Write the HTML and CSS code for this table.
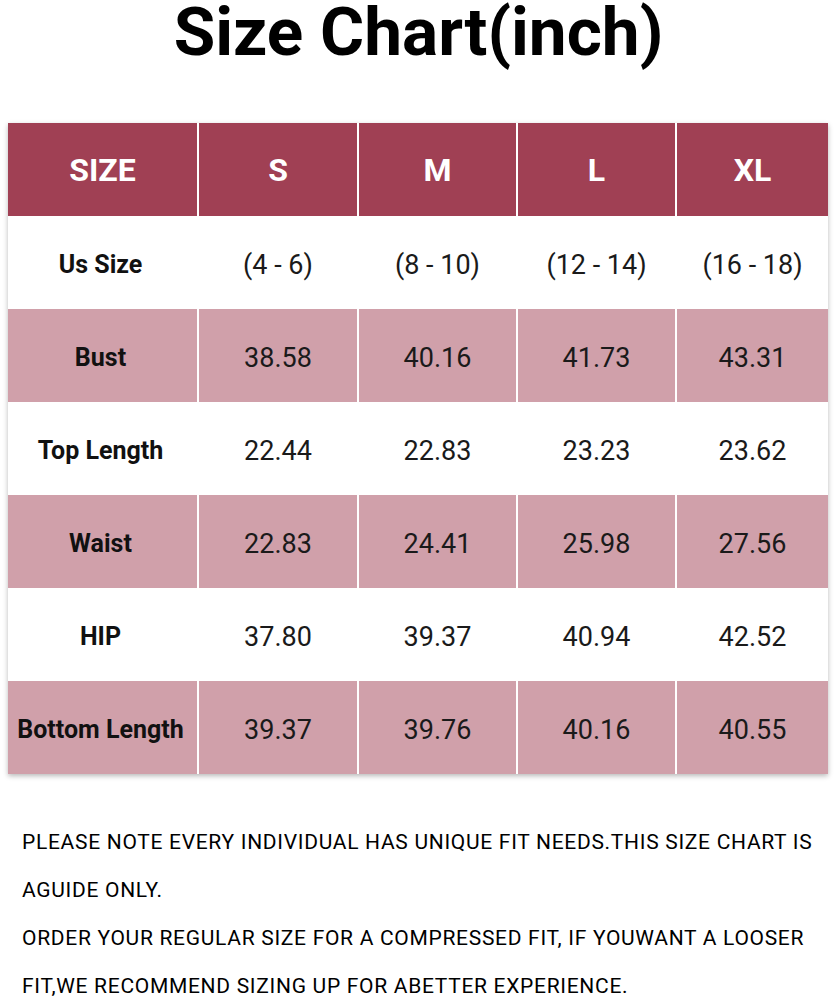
FILE: index.html
```html
<!DOCTYPE html>
<html lang="en">
<head>
<meta charset="utf-8">
<title>Size Chart</title>
<link rel="stylesheet" href="styles.css">
</head>
<body>
<h1 class="title">Size Chart(inch)</h1>
<div class="chart">
  <div class="cell head label">SIZE</div>
  <div class="cell head">S</div>
  <div class="cell head">M</div>
  <div class="cell head">L</div>
  <div class="cell head">XL</div>

  <div class="cell label">Us Size</div>
  <div class="cell">(4 - 6)</div>
  <div class="cell">(8 - 10)</div>
  <div class="cell">(12 - 14)</div>
  <div class="cell">(16 - 18)</div>

  <div class="cell pink label">Bust</div>
  <div class="cell pink">38.58</div>
  <div class="cell pink">40.16</div>
  <div class="cell pink">41.73</div>
  <div class="cell pink">43.31</div>

  <div class="cell label">Top Length</div>
  <div class="cell">22.44</div>
  <div class="cell">22.83</div>
  <div class="cell">23.23</div>
  <div class="cell">23.62</div>

  <div class="cell pink label">Waist</div>
  <div class="cell pink">22.83</div>
  <div class="cell pink">24.41</div>
  <div class="cell pink">25.98</div>
  <div class="cell pink">27.56</div>

  <div class="cell label">HIP</div>
  <div class="cell">37.80</div>
  <div class="cell">39.37</div>
  <div class="cell">40.94</div>
  <div class="cell">42.52</div>

  <div class="cell pink label">Bottom Length</div>
  <div class="cell pink">39.37</div>
  <div class="cell pink">39.76</div>
  <div class="cell pink">40.16</div>
  <div class="cell pink">40.55</div>
</div>
<div class="notes">
  <p class="note"><span class="line">PLEASE NOTE EVERY INDIVIDUAL HAS UNIQUE FIT NEEDS.THIS SIZE CHART IS</span><span class="line">AGUIDE ONLY.</span></p>
  <p class="note"><span class="line">ORDER YOUR REGULAR SIZE FOR A COMPRESSED FIT, IF YOUWANT A LOOSER</span><span class="line">FIT,WE RECOMMEND SIZING UP FOR ABETTER EXPERIENCE.</span></p>
</div>
</body>
</html>
```
FILE: styles.css
```css
html, body {
  margin: 0;
  padding: 0;
  background: #ffffff;
}
body {
  width: 837px;
  font-family: Roboto, "Noto Sans", sans-serif;
  color: #111111;
  overflow: hidden;
}
.title {
  margin: 0;
  padding-top: 3px;
  font-size: 67.5px;
  line-height: 58px;
  font-weight: 700;
  text-align: center;
  color: #000000;
}
.chart {
  margin: 62px 0 0 8px;
  width: 820px;
  display: grid;
  grid-template-columns: 189px 158px 157px 157px 151px;
  grid-auto-rows: 93px;
  column-gap: 2px;
  background: #ffffff;
  box-shadow: 0 2px 5px rgba(0, 0, 0, 0.28);
}
.cell {
  display: flex;
  align-items: center;
  justify-content: center;
  padding-top: 4px;
  font-size: 27px;
  font-weight: 400;
  color: #1a1a1a;
  background: #ffffff;
}
.cell.label {
  font-size: 25px;
  font-weight: 700;
  color: #111111;
  padding-right: 4px;
}
.cell.head {
  padding-top: 0;
  padding-right: 0;
  background: #a04054;
  color: #ffffff;
  font-size: 32px;
  font-weight: 700;
}
.cell.pink {
  background: #d0a0aa;
}
.notes {
  margin-top: 44px;
  padding-left: 22px;
}
.note {
  margin: 0;
}
.line {
  display: block;
  font-size: 21px;
  line-height: 48px;
  letter-spacing: 0.7px;
  color: #000000;
  white-space: nowrap;
}
```
